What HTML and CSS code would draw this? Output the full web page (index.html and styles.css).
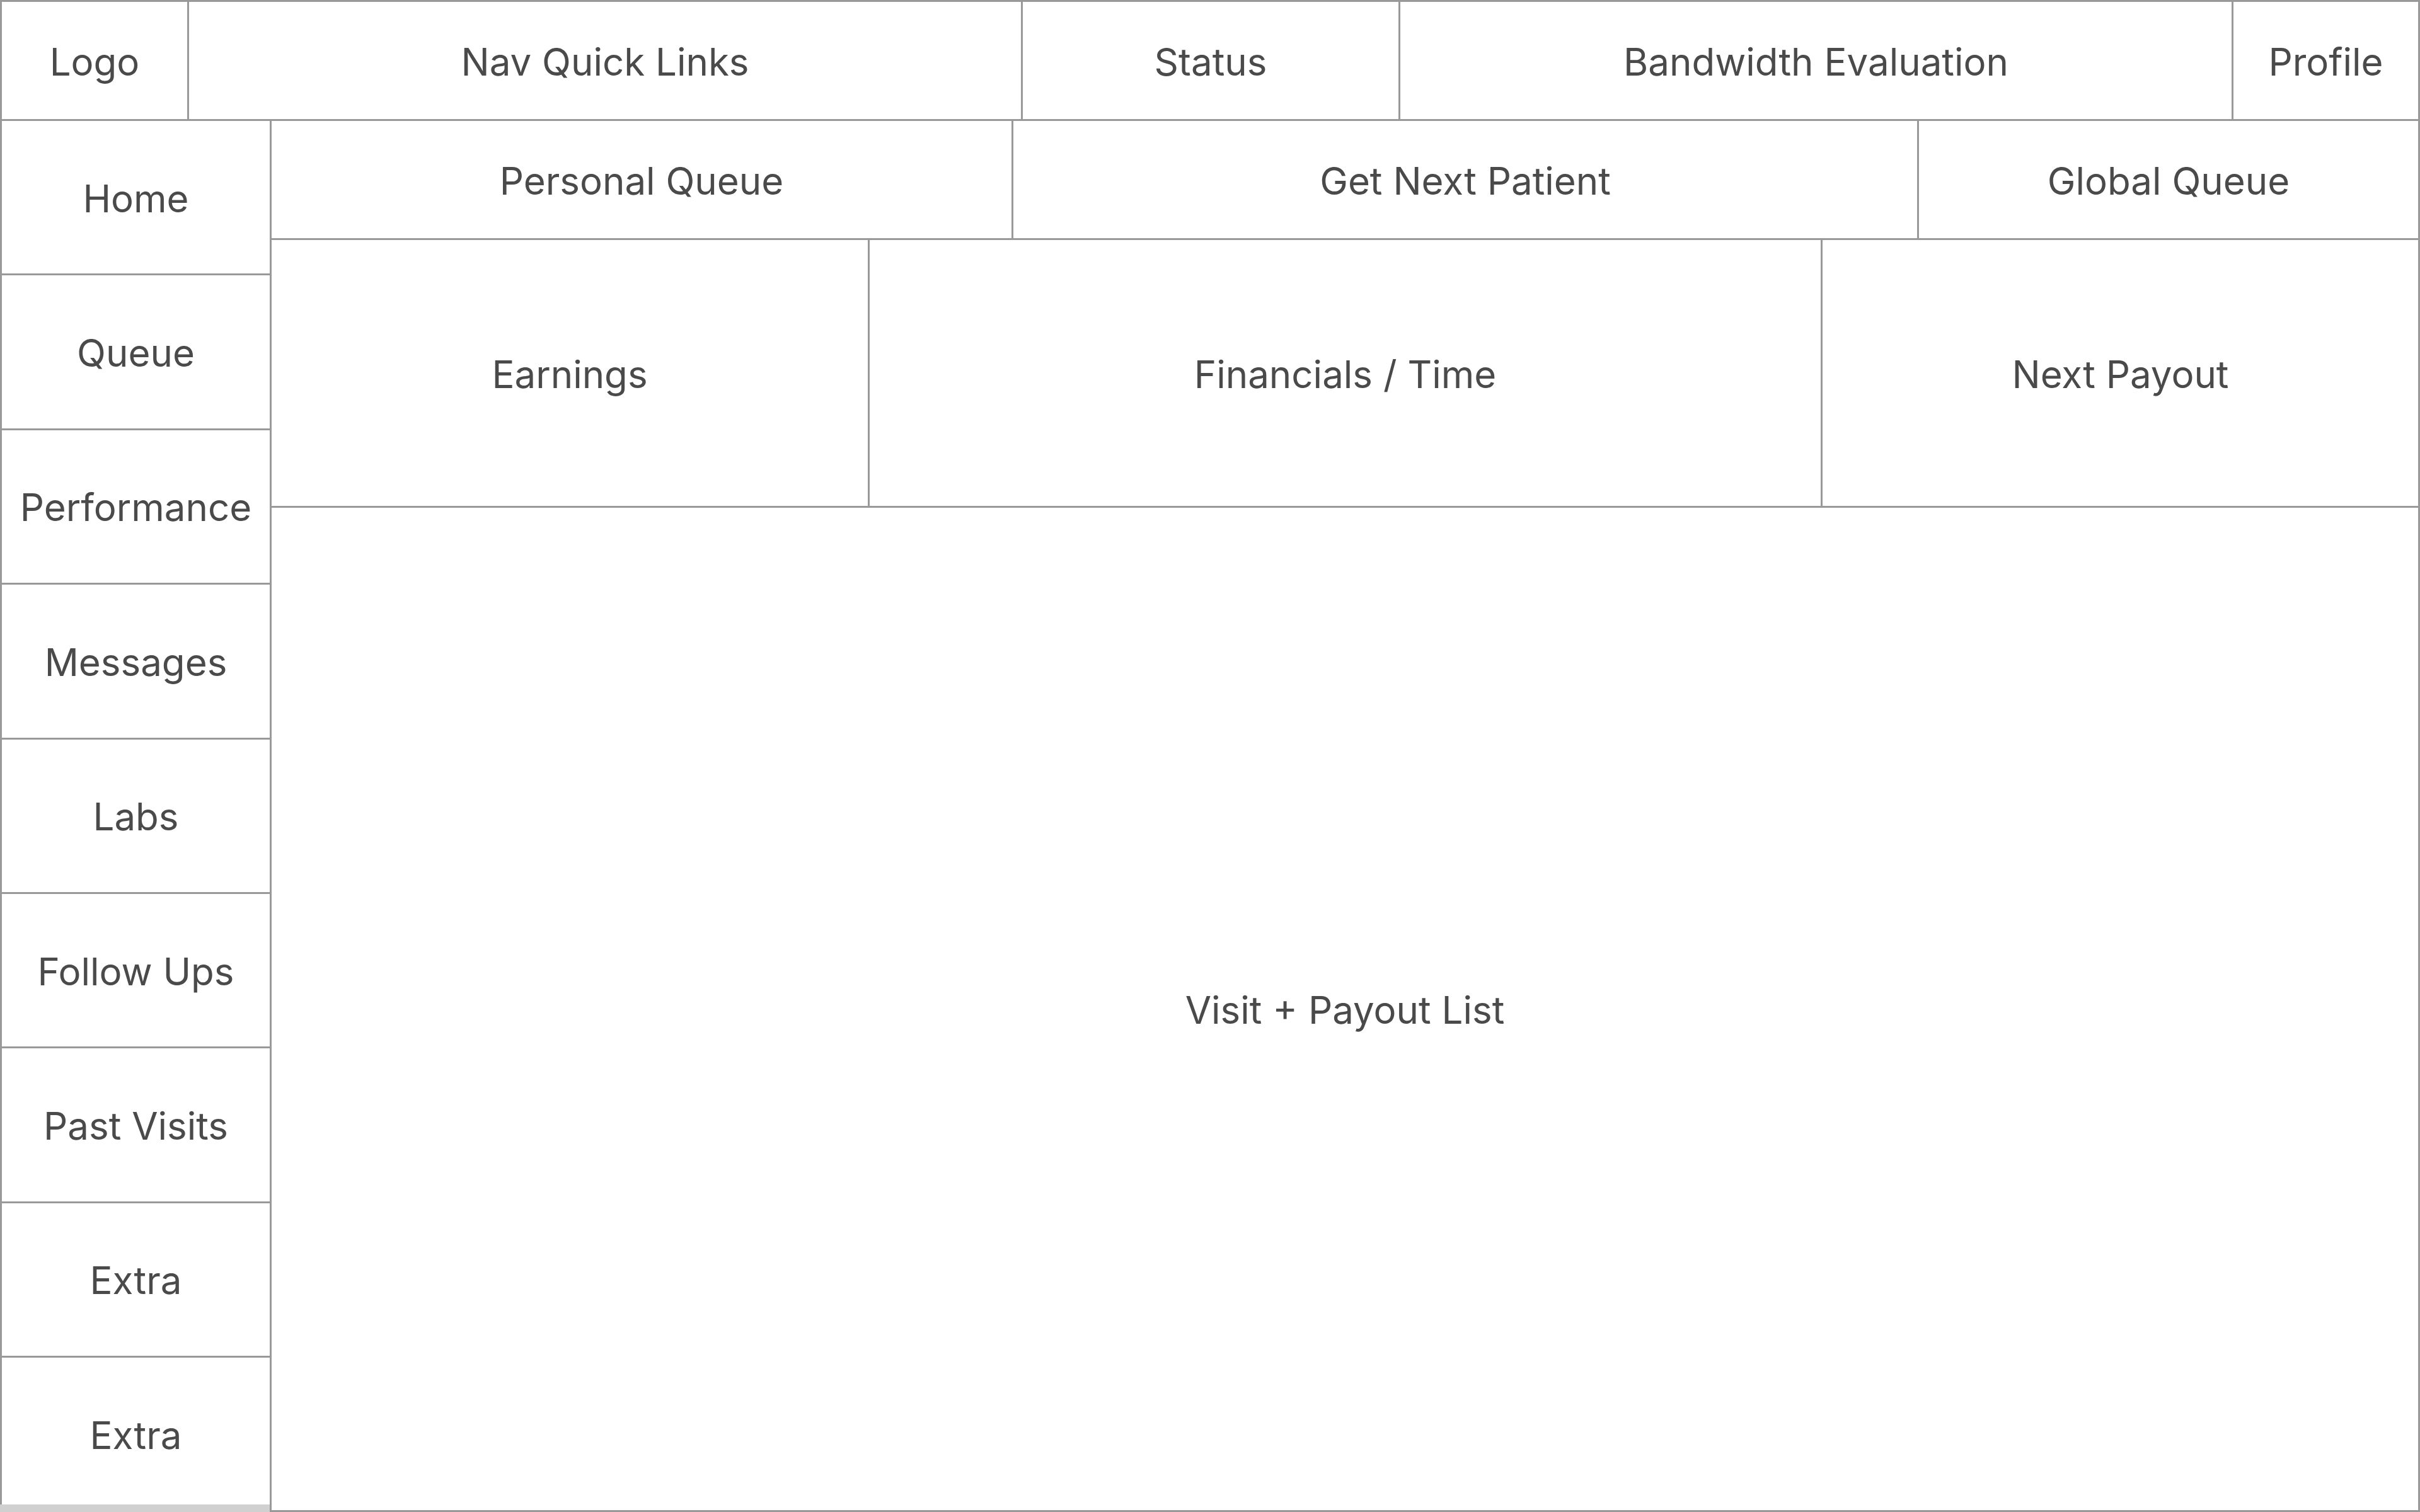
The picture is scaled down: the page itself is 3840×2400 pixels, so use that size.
FILE: index.html
```html
<!DOCTYPE html>
<html lang="en">
<head>
<meta charset="utf-8">
<title>Provider Dashboard Wireframe</title>
<link rel="stylesheet" href="styles.css">
</head>
<body>
<div class="app">
  <header class="topbar">
    <div class="cell logo">Logo</div>
    <div class="cell nav-links">Nav Quick Links</div>
    <div class="cell status">Status</div>
    <div class="cell bandwidth">Bandwidth Evaluation</div>
    <div class="cell profile">Profile</div>
  </header>
  <div class="body">
    <aside class="sidebar">
      <nav class="side-list">
        <div class="cell side-item">Home</div>
        <div class="cell side-item">Queue</div>
        <div class="cell side-item">Performance</div>
        <div class="cell side-item">Messages</div>
        <div class="cell side-item">Labs</div>
        <div class="cell side-item">Follow Ups</div>
        <div class="cell side-item">Past Visits</div>
        <div class="cell side-item">Extra</div>
        <div class="cell side-item">Extra</div>
      </nav>
      <div class="side-scroll"></div>
    </aside>
    <main class="content">
      <div class="row queue-row">
        <div class="cell personal">Personal Queue</div>
        <div class="cell next-patient">Get Next Patient</div>
        <div class="cell global">Global Queue</div>
      </div>
      <div class="row stats-row">
        <div class="cell earnings">Earnings</div>
        <div class="cell financials">Financials / Time</div>
        <div class="cell payout">Next Payout</div>
      </div>
      <div class="cell list">Visit + Payout List</div>
    </main>
  </div>
</div>
</body>
</html>
```
FILE: styles.css
```css
* { box-sizing: border-box; }

html, body {
  margin: 0;
  padding: 0;
  background: #ffffff;
}

body {
  font-family: Inter, Roboto, "Liberation Sans", sans-serif;
  font-size: 60px;
  color: #4a4a4a;
}

.app {
  width: 3840px;
  height: 2400px;
  display: flex;
  flex-direction: column;
  background: #999999;
}

.cell {
  background: #ffffff;
  display: flex;
  align-items: center;
  justify-content: center;
  white-space: nowrap;
  padding-top: 3px;
}

.topbar {
  height: 192px;
  flex: none;
  display: flex;
  gap: 3px;
  padding: 3px 3px 3px 3px;
}

.logo { width: 294px; flex: none; }
.nav-links { width: 1320px; flex: none; }
.status { width: 596px; flex: none; }
.bandwidth { width: 1319px; flex: none; }
.profile { flex: 1; }

.body {
  flex: 1;
  display: flex;
  gap: 3px;
  min-height: 0;
}

.sidebar {
  width: 428px;
  flex: none;
  display: flex;
  flex-direction: column;
  background: #d0d0d0;
}

.side-list {
  flex: 1;
  min-height: 0;
  overflow: hidden;
  display: flex;
  flex-direction: column;
  gap: 3px;
  padding-left: 3px;
  background: #999999;
}

.side-item {
  height: 242.4px;
  flex: none;
}

.side-scroll {
  height: 12px;
  flex: none;
  background: #d0d0d0;
}

.content {
  flex: 1;
  display: flex;
  flex-direction: column;
  gap: 3px;
  padding: 0 3px 3px 0;
}

.row {
  display: flex;
  gap: 3px;
  flex: none;
}

.queue-row { height: 186px; }
.personal { width: 1174px; flex: none; }
.next-patient { width: 1434px; flex: none; }
.global { flex: 1; }

.stats-row { height: 422px; }
.earnings { width: 946px; flex: none; }
.financials { width: 1509px; flex: none; }
.payout { flex: 1; }

.list { flex: 1; }
```
